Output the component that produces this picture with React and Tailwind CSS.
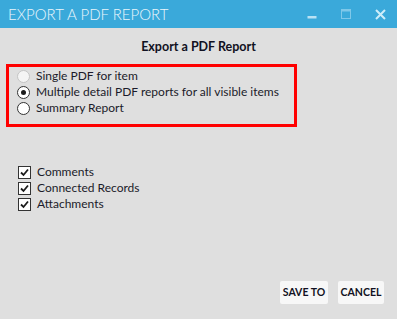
import React from 'react';

const font = { fontFamily: 'Lato, "Noto Sans", sans-serif' };

const Radio = ({ checked, disabled, label }) => (
  <label className="flex items-center h-[16px] gap-[6px] whitespace-nowrap">
    <span
      className={
        'w-[13px] h-[13px] shrink-0 rounded-full border flex items-center justify-center ' +
        (disabled ? 'border-[#c4c4c4] bg-[#f4f4f4]' : 'border-[#333333] bg-white')
      }
    >
      {checked && <span className="w-[5px] h-[5px] rounded-full bg-[#1b1b1b]" />}
    </span>
    <span className="text-[12px] text-[#1b1b2a] leading-none">{label}</span>
  </label>
);

const Check = ({ label }) => (
  <label className="flex items-center h-[16px] gap-[6px] whitespace-nowrap">
    <span className="w-[13px] h-[13px] shrink-0 border border-[#333333] bg-white flex items-center justify-center">
      <svg width="9" height="9" viewBox="0 0 9 9">
        <path d="M1 4.5 L3.5 7 L8 1.5" fill="none" stroke="#1b1b1b" strokeWidth="1.8" />
      </svg>
    </span>
    <span className="text-[12px] text-[#1b1b2a] leading-none">{label}</span>
  </label>
);

const App = () => {
  return (
    <div className="w-[397px] h-[319px] bg-[#dfdfdf] flex flex-col" style={font}>
      <header className="h-[28px] bg-[#3aa9da] flex items-center justify-between">
        <span className="pl-[8px] text-[15px] font-light text-[#eaf6fc] whitespace-nowrap">EXPORT A PDF REPORT</span>
        <div className="flex h-full">
          <button className="w-[34px] h-full flex items-center justify-center">
            <svg width="10" height="10" viewBox="0 0 10 10">
              <rect x="0.5" y="7" width="9" height="2.5" fill="#b9e2f4" />
            </svg>
          </button>
          <button className="w-[34px] h-full flex items-center justify-center">
            <svg width="10" height="10" viewBox="0 0 10 10">
              <rect x="0.5" y="0.5" width="9" height="9" fill="none" stroke="#7fc8e9" />
              <rect x="0.5" y="0.5" width="9" height="2" fill="#7fc8e9" />
            </svg>
          </button>
          <button className="w-[34px] h-full flex items-center justify-center">
            <svg width="11" height="11" viewBox="0 0 11 11">
              <path d="M1 1 L10 10 M10 1 L1 10" stroke="#cdedfa" strokeWidth="2" />
            </svg>
          </button>
        </div>
      </header>

      <div className="flex-1 flex flex-col">
        <h2 className="mt-[11px] h-[16px] text-center text-[12.5px] font-bold text-[#111122] leading-[16px]">
          Export a PDF Report
        </h2>

        <div className="mt-[9px] ml-[6px] w-[291px] h-[63px] border-[3px] border-[#ff0000] pt-[1px] pl-[8px] flex flex-col">
          <Radio disabled label="Single PDF for item" />
          <Radio checked label="Multiple detail PDF reports for all visible items" />
          <Radio label="Summary Report" />
        </div>

        <div className="mt-[37px] ml-[18px] flex flex-col">
          <Check label="Comments" />
          <Check label="Connected Records" />
          <Check label="Attachments" />
        </div>
      </div>

      <div className="flex justify-end gap-[10px] pr-[13px] pb-[15px]">
        <button className="w-[48px] h-[23px] bg-[#f7f7f7] rounded-[2px] text-[10.5px] font-bold text-[#111122] whitespace-nowrap">
          SAVE TO
        </button>
        <button className="w-[46px] h-[23px] bg-[#f7f7f7] rounded-[2px] text-[10.5px] font-bold text-[#111122] whitespace-nowrap">
          CANCEL
        </button>
      </div>
    </div>
  );
};

export default App;
